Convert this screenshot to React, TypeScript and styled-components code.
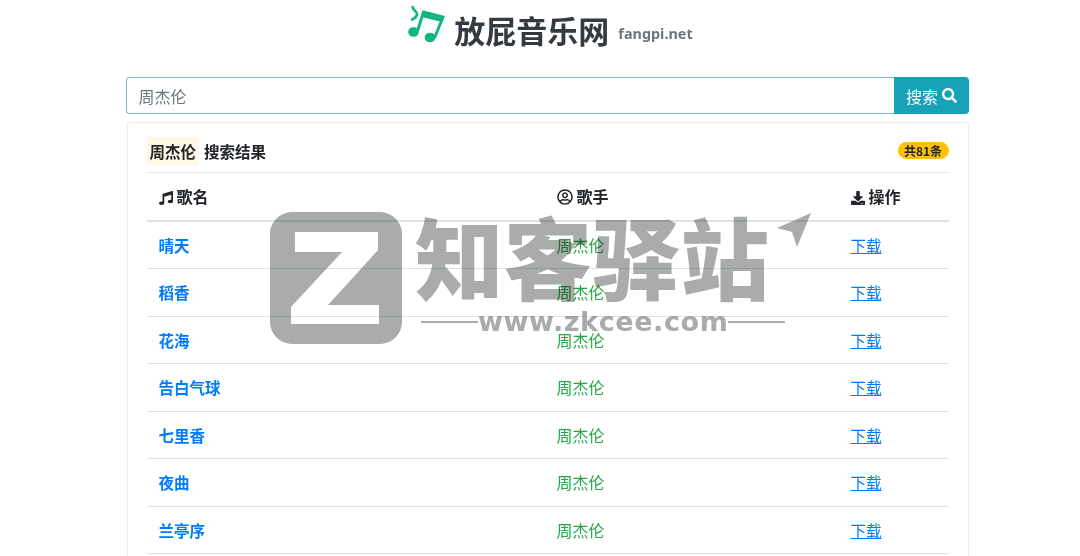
import React from "react";
import styled, { createGlobalStyle } from "styled-components";
import { FaMusic, FaRegUserCircle, FaDownload, FaSearch } from "react-icons/fa";

const Global = createGlobalStyle`
  html, body { margin: 0; padding: 0; background: #fff; }
  body { font-family: "Noto Sans", "Noto Sans CJK SC", sans-serif; font-size: 16px; color: #212529; }
`;
const Page = styled.div`
  position: relative; height: 556px; overflow: hidden; box-sizing: border-box; padding-left: 15px;
  display: flex; flex-direction: column; align-items: center;
`;
const Header = styled.header`
  flex: none; height: 77px; width: 100%; box-sizing: border-box; padding: 3px 0 0 6px;
  display: flex; justify-content: center; align-items: flex-start;
`;
const Logo = styled.svg`width: 37px; height: 41px; margin-right: 9px; flex: none;`;
const SiteName = styled.h1`
  margin: 5px 9px 0 0; font: 700 31px/44px "Noto Sans CJK SC", sans-serif; color: #343a40;
`;
const Domain = styled.span`
  margin-top: 19px; font: 700 14.4px/24px "Noto Sans", sans-serif; color: #6c757d;
`;
const Search = styled.form`flex: none; display: flex; width: 843px; height: 37px; margin-left: -1px;`;
const Input = styled.div`
  flex: 1; box-sizing: border-box; padding: 0 13px 0 12px; display: flex; align-items: center;
  border: 1px solid #74bfce; border-right: 0; border-radius: 4px 0 0 4px; color: #6c757d;
  font: 16px "Noto Sans CJK SC", sans-serif;
`;
const SearchButton = styled.button`
  width: 75px; display: flex; align-items: center; justify-content: center; gap: 4px; padding: 0 0 0 1px;
  border: 0; border-radius: 0 4px 4px 0; background: #17a2b8; color: #fff;
  font: 16px "Noto Sans CJK SC", sans-serif;
`;
const Card = styled.section`
  width: 842px; min-height: 520px; margin-top: 8px; box-sizing: border-box; flex: none;
  padding: 14px 19px; border: 1px solid #e9ecef; border-radius: 4px; background: #fff;
`;
const TitleRow = styled.div`
  height: 35px; display: flex; align-items: flex-start; justify-content: space-between;
  border-bottom: 1px solid #e9ecef;
`;
const Title = styled.h2`
  margin: 0; font: 700 15.5px/28px "Noto Sans CJK SC", sans-serif; display: flex; gap: 5px;
`;
const Mark = styled.mark`background: #fff8e6; color: #212529; padding: 0 3px;`;
const Count = styled.span`
  margin-top: 5px; width: 51px; height: 17px; border-radius: 9px; background: #ffc107; color: #212529;
  font: 700 12px/17px "Noto Sans CJK SC", sans-serif; text-align: center;
`;
const Table = styled.table`width: 802px; border-collapse: collapse; table-layout: fixed;`;
const Head = styled.th<{ $w: number }>`
  width: ${p => p.$w}px; height: 48px; padding: 0 12px 1px; box-sizing: border-box; text-align: left;
  border-bottom: 2px solid #dee2e6; font: 700 16px "Noto Sans CJK SC", sans-serif;
  svg { margin-right: 4px; vertical-align: -2px; }
`;
const Cell = styled.td`
  height: 47.5px; padding: 0 12px; box-sizing: border-box; border-bottom: 1px solid #dee2e6;
  font: 16px "Noto Sans CJK SC", sans-serif;
`;
const Song = styled(Cell)`font-size: 15.5px; font-weight: 700; color: #007bff;`;
const Singer = styled(Cell)`color: #28a745;`;
const DownloadLink = styled.a`font-size: 15.5px; color: #007bff; text-decoration: underline;`;
const Watermark = styled.div`
  position: absolute; left: 270px; top: 212px; width: 545px; height: 135px;
  mix-blend-mode: multiply; color: #a9acab; pointer-events: none;
`;
const Badge = styled.svg`position: absolute; left: 0; top: 0; width: 132px; height: 132px;`;
const Brand = styled.div`
  position: absolute; left: 145px; top: -12px; white-space: nowrap;
  font: 900 88.5px/108px "Noto Sans CJK SC", sans-serif;
`;
const Url = styled.div`
  position: absolute; left: 151px; top: 96px; white-space: nowrap; display: flex; align-items: center;
  font: 700 27px/28px "DejaVu Sans", sans-serif; letter-spacing: 0.6px;
`;
const Rule = styled.i`display: block; width: 57px; height: 2px; background: #a9acab;`;
const Arrow = styled.svg`position: absolute; left: 505px; top: 0; width: 38px; height: 36px;`;

const songs = ["晴天", "稻香", "花海", "告白气球", "七里香", "夜曲", "兰亭序"];

export default function App() {
  return (
    <Page>
      <Global />
      <Header>
        <Logo viewBox="0 0 37 41">
          <g fill="#12b57f" stroke="#12b57f">
            <ellipse cx="5.5" cy="29" rx="5.3" ry="4.8" stroke="none" />
            <ellipse cx="22" cy="34.5" rx="5.3" ry="4.8" stroke="none" />
            <path d="M9.5 28 L15.5 9 L35 14 L26.5 35" fill="none" strokeWidth="3" />
            <path d="M14.5 12 L34 17" fill="none" strokeWidth="4" />
            <path d="M5 3 C3 7 10 8 9 12 C8 15 5 16 3 17" fill="none" strokeWidth="2.6" />
          </g>
        </Logo>
        <SiteName>放屁音乐网</SiteName>
        <Domain>fangpi.net</Domain>
      </Header>
      <Search>
        <Input>周杰伦</Input>
        <SearchButton type="button">搜索 <FaSearch size={15} /></SearchButton>
      </Search>
      <Card>
        <TitleRow>
          <Title><Mark>周杰伦</Mark> 搜索结果</Title>
          <Count>共81条</Count>
        </TitleRow>
        <Table>
          <thead>
            <tr>
              <Head $w={398}><FaMusic size={14} />歌名</Head>
              <Head $w={294}><FaRegUserCircle size={16} />歌手</Head>
              <Head $w={110}><FaDownload size={14} />操作</Head>
            </tr>
          </thead>
          <tbody>
            {songs.map(s => (
              <tr key={s}>
                <Song>{s}</Song>
                <Singer>周杰伦</Singer>
                <Cell><DownloadLink href="#">下载</DownloadLink></Cell>
              </tr>
            ))}
          </tbody>
        </Table>
      </Card>
      <Watermark>
        <Badge viewBox="0 0 132 132">
          <path fillRule="evenodd" fill="#a9acab" d="M22 0H110A22 22 0 0 1 132 22V110A22 22 0 0 1 110 132H22A22 22 0 0 1 0 110V22A22 22 0 0 1 22 0Z M25 20H108V38L58 93H109V112H21V95L72 40H25Z" />
        </Badge>
        <Brand>知客驿站</Brand>
        <Url><Rule />www.zkcee.com<Rule /></Url>
        <Arrow viewBox="0 0 38 36">
          <path fill="#a9acab" d="M36 1 L2 16 L17 20 L22 35 Z" />
        </Arrow>
      </Watermark>
    </Page>
  );
}
